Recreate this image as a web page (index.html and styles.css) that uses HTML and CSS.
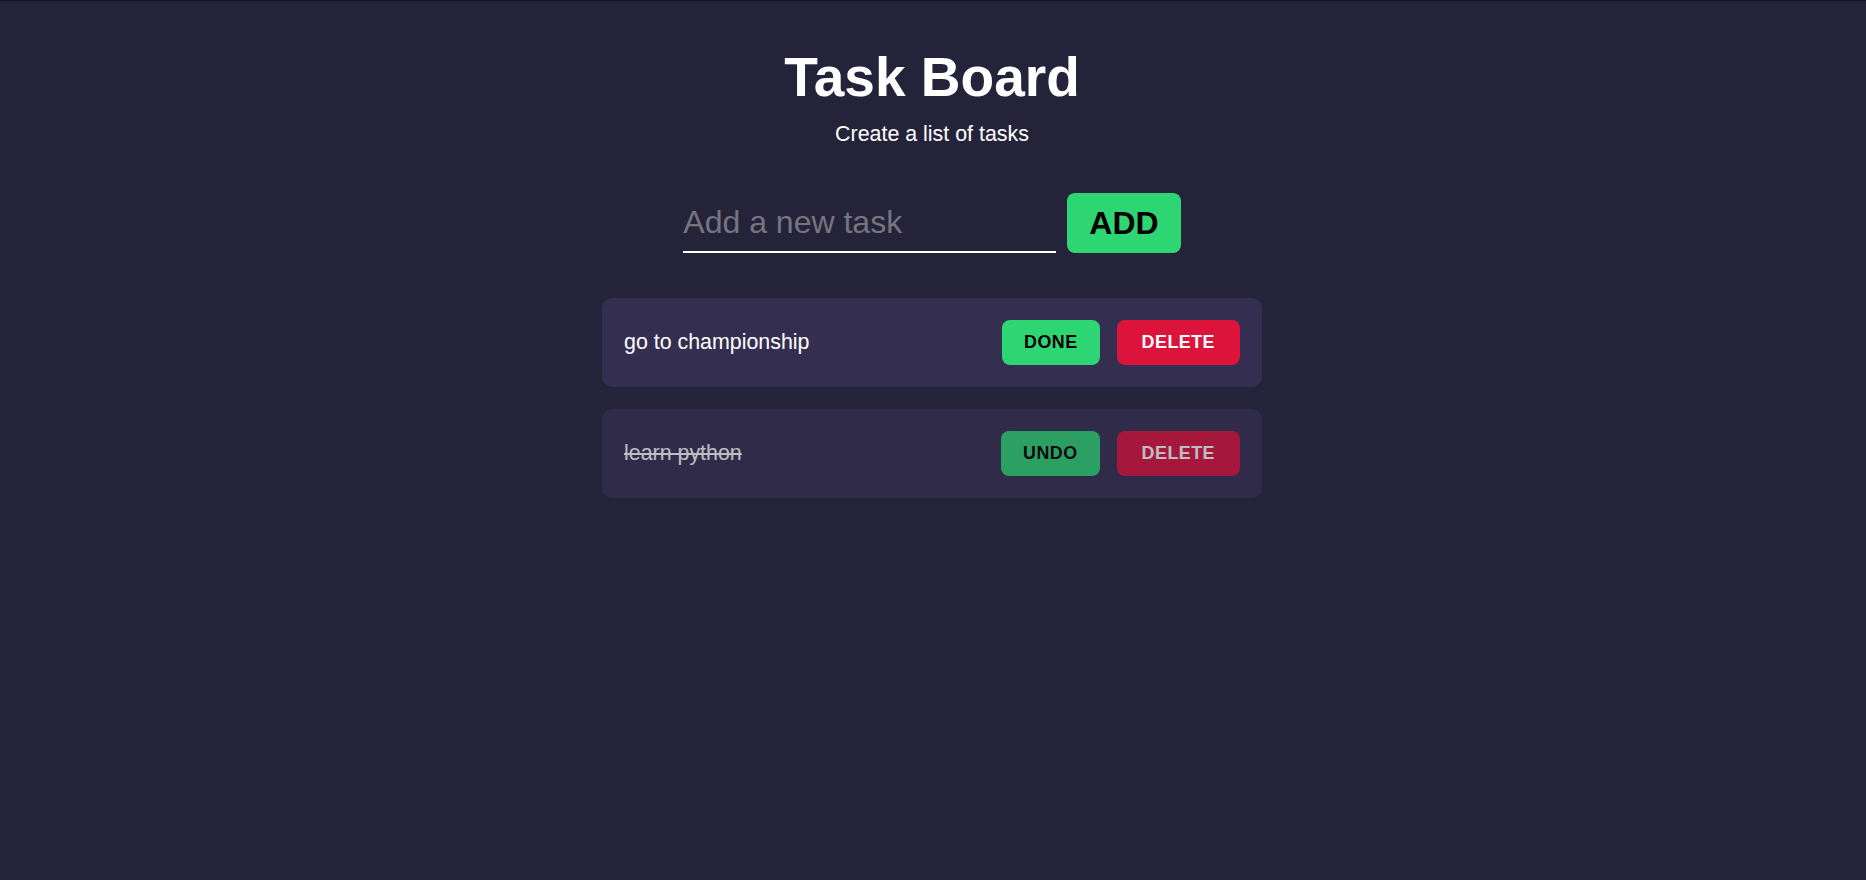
FILE: index.html
```html
<!DOCTYPE html>
<html lang="en">
<head>
<meta charset="utf-8">
<title>Task Board</title>
<link rel="stylesheet" href="styles.css">
</head>
<body>
<div class="app">
  <h1 class="title">Task Board</h1>
  <p class="subtitle">Create a list of tasks</p>
  <form class="add-row" onsubmit="return false">
    <input class="task-input" type="text" placeholder="Add a new task">
    <button class="add-btn" type="submit">ADD</button>
  </form>
  <ul class="task-list">
    <li class="task">
      <span class="task-text">go to championship</span>
      <div class="actions">
        <button class="btn btn-done">DONE</button>
        <button class="btn btn-delete">DELETE</button>
      </div>
    </li>
    <li class="task task-completed">
      <span class="task-text">learn python</span>
      <div class="actions">
        <button class="btn btn-done">UNDO</button>
        <button class="btn btn-delete">DELETE</button>
      </div>
    </li>
  </ul>
</div>
</body>
</html>
```

FILE: styles.css
```css
* { box-sizing: border-box; }

html, body {
  margin: 0;
  padding: 0;
  height: 100%;
}

body {
  background: #25233a;
  border-top: 1px solid #15141d;
  font-family: "Liberation Sans", Arial, sans-serif;
  color: #ffffff;
}

.app {
  display: flex;
  flex-direction: column;
  align-items: center;
  padding: 43px 2px 0 0;
}

.title {
  margin: 0;
  font-size: 55px;
  font-weight: bold;
  line-height: 66px;
}

.subtitle {
  margin: 12px 0 0;
  font-size: 21.4px;
  line-height: 25px;
}

.add-row {
  display: flex;
  align-items: stretch;
  gap: 11px;
  margin: 46px 0 0;
}

.task-input {
  width: 373px;
  height: 60px;
  padding: 0;
  background: transparent;
  border: none;
  border-bottom: 2px solid #ffffff;
  color: #ffffff;
  font-family: "Liberation Sans", Arial, sans-serif;
  font-size: 32px;
  outline: none;
}

.task-input::placeholder {
  color: #76747f;
}

.add-btn {
  height: 60px;
  padding: 0 22px;
  border: none;
  border-radius: 8px;
  background: #2ed573;
  color: #000000;
  font-family: "Liberation Sans", Arial, sans-serif;
  font-size: 32px;
  font-weight: bold;
}

.task-list {
  list-style: none;
  margin: 45px 0 0;
  padding: 0;
  display: flex;
  flex-direction: column;
  gap: 22px;
  width: 660px;
}

.task {
  display: flex;
  align-items: center;
  justify-content: space-between;
  height: 89px;
  padding: 0 22px;
  background: #342f50;
  border-radius: 10px;
}

.task-text {
  font-size: 21.4px;
}

.task-completed {
  opacity: 0.7;
}

.task-completed .task-text {
  text-decoration: line-through;
}

.actions {
  display: flex;
  gap: 17px;
}

.btn {
  height: 45px;
  padding: 0 22px;
  border: none;
  border-radius: 8px;
  font-family: "Liberation Sans", Arial, sans-serif;
  font-size: 17.85px;
  font-weight: bold;
  letter-spacing: 0.5px;
}

.btn-done {
  background: #2ed573;
  color: #000000;
}

.btn-delete {
  padding: 0 25px;
  background: #dc143c;
  color: #ffffff;
}
```
